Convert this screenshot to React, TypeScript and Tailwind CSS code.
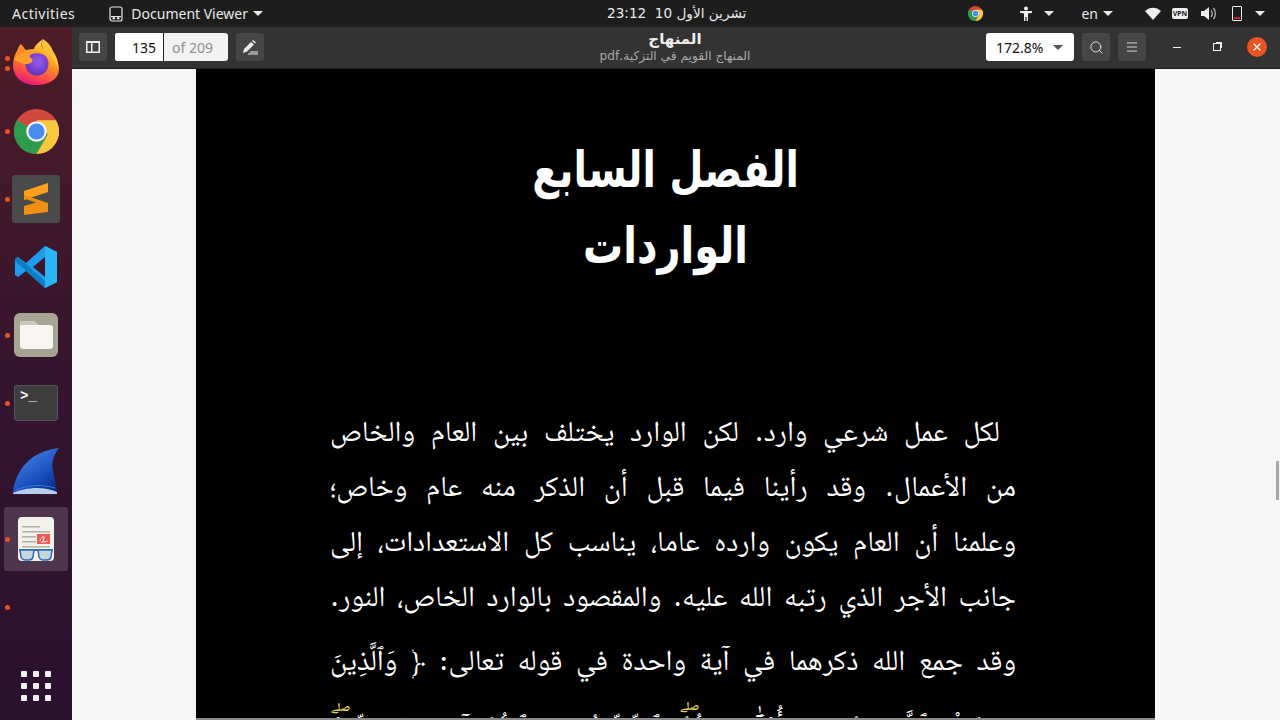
import { Menu, Search } from "lucide-react";

const ui = "font-['Noto_Sans','DejaVu_Sans',sans-serif]";
const arabic = "font-['DejaVu_Serif','Noto_Naskh_Arabic','DejaVu_Sans',serif]";

const Caret = ({ className = "" }: { className?: string }) => (
  <svg width="10" height="5" viewBox="0 0 10 5" className={className}>
    <path d="M0 0h10L5 5z" fill="currentColor" />
  </svg>
);

const ChromeIcon = ({ size }: { size: number }) => (
  <svg width={size} height={size} viewBox="0 0 48 48" className="block">
    <circle cx="24" cy="24" r="24" fill="#d0493c" />
    <path d="M24 24 3.200 12A24 24 0 0 0 24 48l12-20.800z" fill="#2e9c4f" />
    <path d="M24 12h20.800A24 24 0 0 1 24 48l12-20.800z" fill="#f8c93e" />
    <circle cx="24" cy="24" r="11" fill="#f1f1f1" />
    <circle cx="24" cy="24" r="8.600" fill="#4a8bf0" />
  </svg>
);

const FirefoxIcon = () => (
  <svg width="46" height="48" viewBox="0 1 46 48" className="block">
    <defs>
      <linearGradient id="ff" x1="0.75" y1="0" x2="0.35" y2="1">
        <stop offset="0" stopColor="#ffe14d" />
        <stop offset="0.45" stopColor="#ff9a1f" />
        <stop offset="0.78" stopColor="#ff4a45" />
        <stop offset="1" stopColor="#e3178a" />
      </linearGradient>
      <radialGradient id="ffg" cx="0.55" cy="0.4" r="0.7">
        <stop offset="0" stopColor="#9a5cf0" />
        <stop offset="1" stopColor="#5b2bb5" />
      </radialGradient>
    </defs>
    <path d="M30 1c-2 5-2 8 1 11 1-1 2-2 2-3 1 4 3 4 6 7 5 6 7 11 7 15 0 10-10 16-23 16S0 40 0 27c0-6 2-11 4-14 1-3 2-5 4-7 0 3 1 5 3 7 2-1 6-2 10-2 1-4 5-7 9-10z" fill="url(#ff)" />
    <path d="M30 1c5 3 8 7 10 12 4 6 6 12 5 18-2-7-6-13-13-17-3-3-4-8-2-13z" fill="#ffc23a" />
    <circle cx="24" cy="26" r="11.500" fill="url(#ffg)" />
    <path d="M1 22c3-6 7-9 12-10 7-1 14 0 18 5-4-2-9-2-12-1-3 1-3 3-1 4 2 1 2 3 0 5-4 2-9 1-12-1-2-1-4-2-5-2z" fill="#ff9f2a" />
    <path d="M8 6c2 2 4 5 5 7-3 1-6 3-8 6-1-5 0-9 3-13z" fill="#ff8a2a" />
  </svg>
);

const SublimeIcon = () => (
  <div className="flex h-12 w-12 items-center justify-center rounded-[3px] bg-[#4a4a4a]">
    <svg width="26" height="32" viewBox="0 0 26 32" className="block">
      <path d="M25 0v9L1 17V8z" fill="#ff9f1a" />
      <path d="M1 12l24 8v9L1 32 1 23l12-3.600L1 15.500z" fill="#f08f12" />
    </svg>
  </div>
);

const VsCodeIcon = () => (
  <svg width="44" height="44" viewBox="0 0 44 44" className="block">
    <path d="M31 1 43 7v30l-12 6-19-17-8 6-3-2V14l3-2 8 6zM31 12 19 22l12 10z" fill="#1f9cf0" />
    <path d="M31 1 43 7v30l-12 6z" fill="#29b6f6" />
    <path d="M1 14l3-2 27 24v7L1 16z" fill="#0a74b8" opacity="0.75" />
  </svg>
);

const FilesIcon = () => (
  <div className="flex h-11 w-11 items-center justify-center rounded-md bg-[#a8a493]">
    <svg width="33" height="28" viewBox="0 0 33 28" className="block">
      <path d="M3 0h11l4 4h12a3 3 0 0 1 3 3v18a3 3 0 0 1-3 3H3a3 3 0 0 1-3-3V3a3 3 0 0 1 3-3z" fill="#f7f6f3" />
      <path d="M3 0h11l4 4H0V3a3 3 0 0 1 3-3z" fill="#c9c6bd" />
    </svg>
  </div>
);

const TerminalIcon = () => (
  <div className="relative h-9 w-11 rounded-[3px] border border-[#555] bg-[#3d3d3d]">
    <span className="absolute left-[5px] top-[2px] font-['Liberation_Mono',monospace] text-[14px] font-bold leading-4 text-white">&gt;_</span>
  </div>
);

const WiresharkIcon = () => (
  <svg width="48" height="48" viewBox="0 0 48 48" className="block">
    <defs>
      <linearGradient id="ws" x1="0" y1="0" x2="0.7" y2="1">
        <stop offset="0" stopColor="#4b8ef0" />
        <stop offset="0.7" stopColor="#1a4fc0" />
        <stop offset="1" stopColor="#082f8a" />
      </linearGradient>
    </defs>
    <path d="M1 46C3 24 18 4 47 1c-7 9-8 17-5 27l3 18z" fill="url(#ws)" />
    <path d="M1 46c10-5 30-8 44-1v2H1z" fill="#b8cdec" />
    <path d="M4 43c12-5 26-6 39-2" stroke="#3f7ad8" strokeWidth="1" fill="none" />
  </svg>
);

const ViewerIcon = () => (
  <svg width="38" height="44" viewBox="0 0 38 44" className="block">
    <rect x="1" y="0" width="36" height="44" rx="4" fill="#f3f1ec" />
    <path d="M5 9h18v1.500H5zM5 14h28v1.500H5zM5 19h14v1.500H5zM5 24h14v1.500H5zM5 29h28v1.500H5z" fill="#b5b1a8" />
    <rect x="20" y="17" width="13" height="10" fill="#ee5a52" />
    <path d="M23 24c2-6 5-5 4-2s-3 3-2 3 4 0 6-1" stroke="#fff" strokeWidth="1" fill="none" />
    <path d="M2 32h34v2H2z" fill="#2f6fb5" />
    <path d="M3 33h14l-1 7c-.5 2-2 3-4 3H8c-2 0-3-1-4-3zM21 33h14l-1 7c-.5 2-2 3-4 3h-4c-2 0-3-1-4-3z" fill="#c9d3dc" stroke="#2f6fb5" strokeWidth="1.500" />
  </svg>
);

const dockItems = [
  { icon: <FirefoxIcon />, dots: 2 },
  { icon: <ChromeIcon size={45} />, dots: 1 },
  { icon: <SublimeIcon />, dots: 1 },
  { icon: <VsCodeIcon />, dots: 0 },
  { icon: <FilesIcon />, dots: 1 },
  { icon: <TerminalIcon />, dots: 1 },
  { icon: <WiresharkIcon />, dots: 0 },
  { icon: <ViewerIcon />, dots: 1, active: true },
  { icon: null, dots: 1 },
];

const Dock = () => (
  <aside className="flex w-[72px] shrink-0 flex-col bg-gradient-to-b from-[#4d1c27] via-[#35142e] to-[#2b1230] pt-[2px]">
    {dockItems.map((item, i) => (
      <div key={i} className="relative flex h-[68px] items-center justify-center">
        {item.active && <div className="absolute inset-x-1 inset-y-[2px] rounded-[3px] bg-white/15" />}
        <div className="absolute left-[5px] top-0 flex h-full flex-col justify-center gap-[5px]">
          {Array.from({ length: item.dots }).map((_, d) => (
            <span key={d} className="h-[5px] w-[5px] rounded-full bg-[#e95420]" />
          ))}
        </div>
        <div className="relative">{item.icon}</div>
      </div>
    ))}
    <div className="mt-auto mb-[19px] grid w-[30px] grid-cols-3 gap-[6px] self-center">
      {Array.from({ length: 9 }).map((_, i) => (
        <span key={i} className="h-[6px] w-[6px] rounded-[1px] bg-[#f2f0f0]" />
      ))}
    </div>
  </aside>
);

const TopBar = () => (
  <div className={`relative flex h-[27px] shrink-0 items-center bg-[#1d1d1d] text-[14px] text-[#e8e8e8] ${ui}`}>
    <span className="ml-3 tracking-[0.5px]">Activities</span>
    <svg width="14" height="16" viewBox="0 0 14 16" className="ml-[34px]">
      <rect x="1" y="1" width="12" height="14" rx="2" fill="none" stroke="#e8e8e8" strokeWidth="1.200" />
      <path d="M2 10.500h10" stroke="#e8e8e8" />
      <circle cx="4.800" cy="12.200" r="1.300" fill="#e8e8e8" />
      <circle cx="9.200" cy="12.200" r="1.300" fill="#e8e8e8" />
    </svg>
    <span className="ml-2">Document Viewer</span>
    <Caret className="ml-[5px]" />
    <span dir="rtl" className="absolute left-[607px] font-['DejaVu_Sans',sans-serif] text-[13.600px]">
      تشرين الأول 10&nbsp; 23:12
    </span>
    <div className="ml-auto flex items-center">
      <ChromeIcon size={15} />
      <svg width="14" height="16" viewBox="0 0 14 16" className="ml-[36px]" fill="#eee">
        <circle cx="7" cy="2.500" r="2" />
        <path d="M1 5h12v1.800L9 7.500V15H7.600v-4H6.400v4H5V7.500L1 6.800z" />
      </svg>
      <Caret className="ml-[11px]" />
      <span className="ml-[27px]">en</span>
      <Caret className="ml-[5px]" />
      <svg width="16" height="13" viewBox="0 0 16 13" className="ml-[32px]" fill="#eee">
        <path d="M0 4c4.500-4.500 11.500-4.500 16 0l-8 9z" />
      </svg>
      <div className="ml-[11px] flex h-[11px] w-4 items-center justify-center rounded-[2px] bg-[#eee] text-[7px] font-bold leading-none text-[#1d1d1d]">VPN</div>
      <svg width="17" height="15" viewBox="0 0 17 15" className="ml-[13px]">
        <path d="M0 5h3l5-4v13L3 10H0z" fill="#eee" />
        <path d="M10 4c1.500 2 1.500 5 0 7M12.500 2c2.500 3 2.500 8 0 11" stroke="#bbb" strokeWidth="1.200" fill="none" />
      </svg>
      <div className="relative ml-[14px] h-[15px] w-[10px] rounded-[1px] border border-[#eee]">
        <span className="absolute inset-x-[1px] bottom-[1px] h-[2px] bg-[#c7281f]" />
      </div>
      <Caret className="ml-[13px] mr-[15px]" />
    </div>
  </div>
);

const ToolButton = ({ children, className = "" }: { children: React.ReactNode; className?: string }) => (
  <div className={`flex h-7 w-7 items-center justify-center rounded-[3px] bg-[#464646] text-[#e8e8e8] ${className}`}>{children}</div>
);

const Header = () => (
  <header className={`relative flex h-[42px] shrink-0 items-center border-b border-[#1e1e1e] bg-[#333333] pb-[1px] pl-[7px] text-[14px] ${ui}`}>
    <ToolButton>
      <svg width="14" height="12" viewBox="0 0 14 12">
        <path d="M0 0h14v12H0zM1.500 2v8.500H5V2zM6.500 2v8.500h6V2z" fill="#eee" fillRule="evenodd" />
      </svg>
    </ToolButton>
    <div className="ml-2 flex h-7 w-[113px] overflow-hidden rounded-[3px] bg-[#f2f2f2]">
      <div className="flex w-[49px] items-center justify-end border-r border-[#222] bg-white pr-[7px] text-[#111]">135</div>
      <div className="flex items-center pl-2 text-[#8f8f8f]">of 209</div>
    </div>
    <ToolButton className="ml-2">
      <svg width="16" height="15" viewBox="0 0 16 15" fill="#eee">
        <path d="M1 13 2 9l7-7 3 2.500-7 7zM10 1l1-1 3 2.500-1 1z" />
        <path d="M8 11.500h8v1H8zM6 13.500h10v1H6z" />
      </svg>
    </ToolButton>
    <div className="absolute left-[400px] top-[3px] flex w-[406px] flex-col items-center font-['DejaVu_Sans',sans-serif]" dir="rtl">
      <span className="text-[15px] font-bold leading-[18px] text-[#eeeeee]">المنهاج</span>
      <span className="text-[12.200px] leading-[17px] text-[#a8a8a8]">المنهاج القويم في التزكية.pdf</span>
    </div>
    <div className="ml-auto flex h-7 w-[88px] items-center justify-between rounded-[3px] bg-white pl-[10px] pr-[11px] text-[#111]">
      172.8%
      <Caret className="text-[#555]" />
    </div>
    <ToolButton className="ml-2">
      <Search size={15} strokeWidth={1.5} />
    </ToolButton>
    <ToolButton className="ml-2">
      <Menu size={14} strokeWidth={1.5} />
    </ToolButton>
    <div className="ml-[27px] h-px w-2 bg-[#eee]" />
    <div className="relative ml-[32px] h-2 w-2 border border-[#eee]">
      <span className="absolute -right-[2px] -top-[2px] h-[6px] w-[6px] border-r border-t border-[#eee]" />
    </div>
    <div className="ml-[26px] mr-[13px] flex h-5 w-5 items-center justify-center rounded-full bg-[#e95420]">
      <svg width="8" height="8" viewBox="0 0 8 8" stroke="#fff" strokeWidth="1.300">
        <path d="M0.500 0.500l7 7M7.500 0.500l-7 7" />
      </svg>
    </div>
  </header>
);

const bodyLines = [
  "من الأعمال. وقد رأينا فيما قبل أن الذكر منه عام وخاص؛",
  "وعلمنا أن العام يكون وارده عاما، يناسب كل الاستعدادات، إلى",
  "جانب الأجر الذي رتبه الله عليه. والمقصود بالوارد الخاص، النور.",
];

const Line = ({ children, className = "" }: { children: React.ReactNode; className?: string }) => (
  <p className={`h-[55px] text-justify leading-[55px] [text-align-last:justify] ${className}`}>{children}</p>
);

const Page = () => (
  <main className="relative min-h-0 flex-1 overflow-hidden bg-[#f6f6f6]">
    <div dir="rtl" className={`relative ml-[124px] h-full w-[959px] overflow-hidden bg-black text-white ${arabic}`}>
      <div className="pr-[20px] pt-[63px] text-center font-['DejaVu_Sans',sans-serif] text-[50px] font-bold leading-[76px]">
        <h1 className="scale-x-[0.78]">الفصل السابع</h1>
        <h1 className="scale-x-[0.8]">الواردات</h1>
      </div>
      <div className="mr-[139px] mt-[120px] w-[686px] text-[29px]">
        <Line className="pr-[16px]">لكل عمل شرعي وارد. لكن الوارد يختلف بين العام والخاص</Line>
        {bodyLines.map((line) => (
          <Line key={line}>{line}</Line>
        ))}
        <Line className="mt-[9px]">وقد جمع الله ذكرهما في آية واحدة في قوله تعالى: ﴿ وَٱلَّذِينَ</Line>
        <Line className="mt-[13px]">ءَامَنُواْ بِٱللَّهِ وَرُسُلِهِۦٓ أُوْلَٰٓئِكَ هُمُ ٱلصِّدِّيقُونَ وَٱلشُّهَدَآءُ عِندَ رَبِّهِمْ</Line>
      </div>
      <span className="absolute left-[135px] top-[632px] text-[12px] font-bold leading-3 text-[#e8d44d]">صلے</span>
      <span className="absolute left-[484px] top-[631px] text-[12px] font-bold leading-3 text-[#e8d44d]">صلے</span>
      <div className="absolute inset-x-0 bottom-0 h-[2px] bg-[#8a8a8a]" />
    </div>
    <div className="absolute right-[1px] top-[392px] h-[39px] w-[3px] bg-[#a8a8a8]" />
  </main>
);

export default function App() {
  return (
    <div className="flex h-[720px] w-[1280px] flex-col overflow-hidden bg-black">
      <TopBar />
      <div className="flex min-h-0 flex-1">
        <Dock />
        <div className="flex min-w-0 flex-1 flex-col">
          <Header />
          <Page />
        </div>
      </div>
    </div>
  );
}
